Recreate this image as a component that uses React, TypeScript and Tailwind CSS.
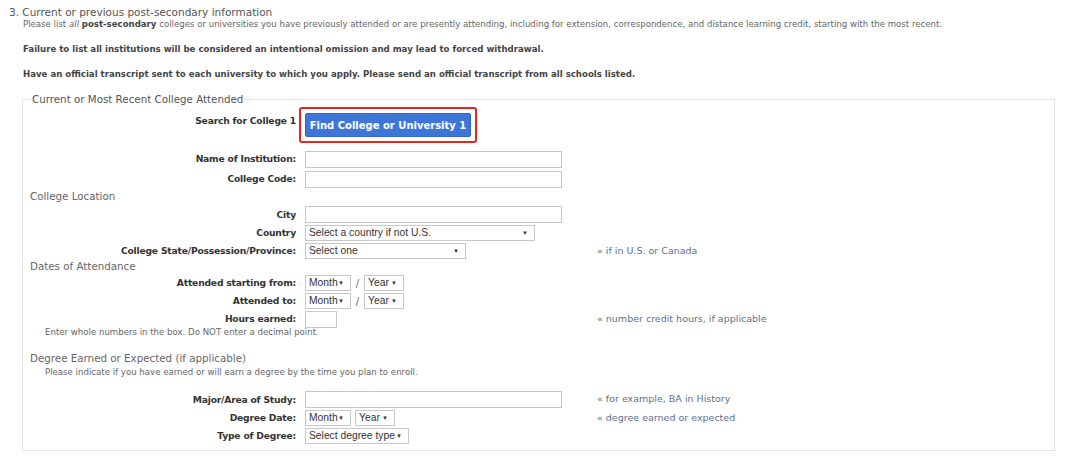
const font = { fontFamily: '"DejaVu Sans", Verdana, sans-serif' };

const Label = ({ children, top }: { children: React.ReactNode; top?: boolean }) => (
  <div
    className={`pr-[9px] text-right text-[9.2px] font-bold tracking-[-0.2px] text-[#333] ${top ? 'self-start pt-[8px]' : ''}`}
  >
    {children}
  </div>
);

const Hint = ({ children }: { children?: React.ReactNode }) => (
  <div className="text-[9.5px] text-[#5f6f90]">{children}</div>
);

const TextBox = ({ w = 'w-[257px]', h = 'h-[17px]' }: { w?: string; h?: string }) => (
  <div className={`${w} ${h} border border-[#c8c8c8] bg-white`} />
);

const Select = ({ text, w }: { text: string; w: string }) => (
  <div
    className={`${w} flex h-[16px] items-center justify-between border border-[#c8c8c8] bg-white pl-[3px] pr-[6px] text-[10.3px] text-[#333]`}
    style={{ fontFamily: '"Liberation Sans", Arial, sans-serif' }}
  >
    <span>{text}</span>
    <span className="text-[6px]">▼</span>
  </div>
);

const Row = ({ h, children }: { h: string; children: React.ReactNode }) => (
  <div className={`grid ${h} grid-cols-[282px_292px_1fr] items-center`}>{children}</div>
);

const MonthYear = ({ slash }: { slash?: boolean }) => (
  <div className={`flex items-center ${slash ? '' : 'gap-[4px]'}`}>
    <Select text="Month" w="w-[46px]" />
    {slash && <span className="w-[13px] text-center text-[10px] text-[#666]">/</span>}
    <Select text="Year" w="w-[40px]" />
  </div>
);

export default function App() {
  return (
    <div className="h-[462px] w-[1080px] overflow-hidden bg-white" style={font}>
      <div className="pl-[9px] pt-[5px] text-[10.5px] leading-[14px] text-[#555]">
        3. Current or previous post-secondary information
      </div>
      <div className="pl-[23px] text-[8.6px] leading-[11px] text-[#666]">
        Please list <i>all</i> <b className="text-[#444]">post-secondary</b> colleges or universities you have previously attended or are presently attending, including for extension, correspondence, and distance learning credit, starting with the most recent.
      </div>
      <div className="mt-[14px] pl-[23px] text-[8.6px] font-bold leading-[11px] text-[#444]">
        Failure to list all institutions will be considered an intentional omission and may lead to forced withdrawal.
      </div>
      <div className="mt-[14px] pl-[23px] text-[8.6px] font-bold leading-[11px] text-[#444]">
        Have an official transcript sent to each university to which you apply. Please send an official transcript from all schools listed.
      </div>

      <fieldset className="ml-[22px] mt-[12px] h-[359px] w-[1033px] border border-[#e2e2e2] px-0 pb-0">
        <legend className="ml-[8px] px-[1px] text-[10.3px] leading-[14px] text-[#555]">
          Current or Most Recent College Attended
        </legend>

        <Row h="h-[43px]">
          <Label top>Search for College 1</Label>
          <div className="-ml-[6px] self-start pt-[1px]">
            <div className="inline-block rounded-[3px] border-2 border-[#e3261f] p-[4px]">
              <div className="flex h-[24px] w-[166px] items-center justify-center rounded-[2px] border border-[#3168c8] bg-[#3e76d8] text-[10px] font-bold text-white">
                Find College or University 1
              </div>
            </div>
          </div>
          <div />
        </Row>
        <Row h="h-[20px]">
          <Label>Name of Institution:</Label>
          <TextBox />
          <div />
        </Row>
        <Row h="h-[20px]">
          <Label>College Code:</Label>
          <TextBox />
          <div />
        </Row>
        <div className="flex h-[16px] items-center pl-[7px] text-[10.3px] text-[#666]">College Location</div>
        <Row h="h-[19px]">
          <Label>City</Label>
          <TextBox />
          <div />
        </Row>
        <Row h="h-[18px]">
          <Label>Country</Label>
          <Select text="Select a country if not U.S." w="w-[230px]" />
          <div />
        </Row>
        <Row h="h-[18px]">
          <Label>College State/Possession/Province:</Label>
          <Select text="Select one" w="w-[161px]" />
          <Hint>« if in U.S. or Canada</Hint>
        </Row>
        <div className="flex h-[14px] items-center pl-[7px] text-[10.3px] text-[#666]">Dates of Attendance</div>
        <Row h="h-[18px]">
          <Label>Attended starting from:</Label>
          <MonthYear slash />
          <div />
        </Row>
        <Row h="h-[18px]">
          <Label>Attended to:</Label>
          <MonthYear slash />
          <div />
        </Row>
        <Row h="h-[18px]">
          <Label>Hours earned:</Label>
          <TextBox w="w-[32px]" h="h-[17px]" />
          <Hint>« number credit hours, if applicable</Hint>
        </Row>
        <div className="flex h-[9px] items-center pl-[22px] text-[8.6px] text-[#666]">
          Enter whole numbers in the box. Do NOT enter a decimal point.
        </div>
        <div className="flex h-[28px] items-end pb-[1px] pl-[7px] text-[10.3px] leading-[12px] text-[#666]">
          Degree Earned or Expected (if applicable)
        </div>
        <div className="flex h-[14px] items-center pl-[22px] text-[8.6px] text-[#666]">
          Please indicate if you have earned or will earn a degree by the time you plan to enroll.
        </div>
        <div className="h-[11px]" />
        <Row h="h-[19px]">
          <Label>Major/Area of Study:</Label>
          <TextBox />
          <Hint>« for example, BA in History</Hint>
        </Row>
        <Row h="h-[18px]">
          <Label>Degree Date:</Label>
          <MonthYear />
          <Hint>« degree earned or expected</Hint>
        </Row>
        <Row h="h-[18px]">
          <Label>Type of Degree:</Label>
          <Select text="Select degree type" w="w-[104px]" />
          <div />
        </Row>
      </fieldset>
    </div>
  );
}
